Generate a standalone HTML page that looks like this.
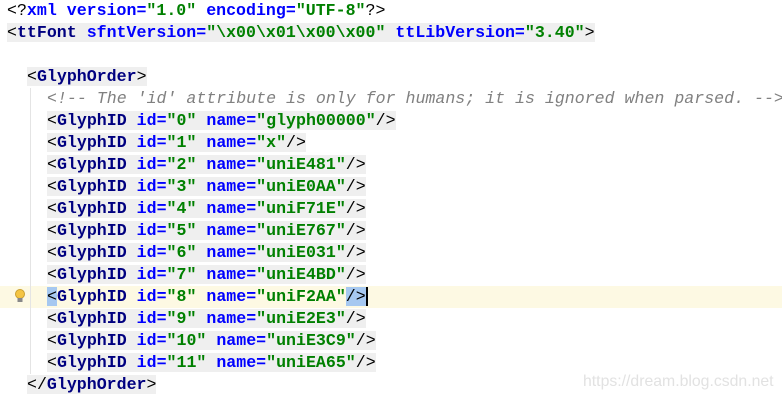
<!DOCTYPE html>
<html><head><meta charset="utf-8"><style>
body{margin:0;width:782px;height:400px;background:#fff;overflow:hidden;position:relative;font-family:"Liberation Mono",monospace;}
.l{position:absolute;left:0;height:22px;line-height:22px;font-size:16.6px;white-space:pre;color:#000;}
.t{background:#efefef;}
.n{color:#000080;font-weight:bold;}
.a{color:#0000ff;font-weight:bold;}
.v{color:#008000;font-weight:bold;}
.c{color:#808080;font-style:italic;}
.hl{position:absolute;left:0;top:286px;width:782px;height:22px;background:#fdf9e3;}
.guide{position:absolute;left:30px;top:88px;width:1px;height:286px;background:#e4e4e4;}
.wm{position:absolute;left:583px;top:373px;font-family:"Liberation Sans",sans-serif;font-size:15.8px;color:#e2e2e2;}
.sel{background:#a6c8f0;}
</style></head><body>
<div class="hl"></div>
<div class="guide"></div>
<div class="l" style="top:0;left:7px">&lt;?<span class="a">xml version=</span><span class="v">"1.0"</span> <span class="a">encoding=</span><span class="v">"UTF-8"</span>?&gt;</div>
<div class="l" style="top:22px;left:7px"><span class="t">&lt;<span class="n">ttFont</span> <span class="a">sfntVersion=</span><span class="v">"\x00\x01\x00\x00"</span> <span class="a">ttLibVersion=</span><span class="v">"3.40"</span>&gt;</span></div>
<div class="l" style="top:66px;left:27px"><span class="t">&lt;<span class="n">GlyphOrder</span>&gt;</span></div>
<div class="l c" style="top:88px;left:47px">&lt;!-- The 'id' attribute is only for humans; it is ignored when parsed. --&gt;</div>
<div class="l" style="top:110px;left:47px"><span class="t">&lt;<span class="n">GlyphID</span> <span class="a">id=</span><span class="v">"0"</span> <span class="a">name=</span><span class="v">"glyph00000"</span>/&gt;</span></div>
<div class="l" style="top:132px;left:47px"><span class="t">&lt;<span class="n">GlyphID</span> <span class="a">id=</span><span class="v">"1"</span> <span class="a">name=</span><span class="v">"x"</span>/&gt;</span></div>
<div class="l" style="top:154px;left:47px"><span class="t">&lt;<span class="n">GlyphID</span> <span class="a">id=</span><span class="v">"2"</span> <span class="a">name=</span><span class="v">"uniE481"</span>/&gt;</span></div>
<div class="l" style="top:176px;left:47px"><span class="t">&lt;<span class="n">GlyphID</span> <span class="a">id=</span><span class="v">"3"</span> <span class="a">name=</span><span class="v">"uniE0AA"</span>/&gt;</span></div>
<div class="l" style="top:198px;left:47px"><span class="t">&lt;<span class="n">GlyphID</span> <span class="a">id=</span><span class="v">"4"</span> <span class="a">name=</span><span class="v">"uniF71E"</span>/&gt;</span></div>
<div class="l" style="top:220px;left:47px"><span class="t">&lt;<span class="n">GlyphID</span> <span class="a">id=</span><span class="v">"5"</span> <span class="a">name=</span><span class="v">"uniE767"</span>/&gt;</span></div>
<div class="l" style="top:242px;left:47px"><span class="t">&lt;<span class="n">GlyphID</span> <span class="a">id=</span><span class="v">"6"</span> <span class="a">name=</span><span class="v">"uniE031"</span>/&gt;</span></div>
<div class="l" style="top:264px;left:47px"><span class="t">&lt;<span class="n">GlyphID</span> <span class="a">id=</span><span class="v">"7"</span> <span class="a">name=</span><span class="v">"uniE4BD"</span>/&gt;</span></div>
<div class="l" style="top:286px;left:47px"><span class="sel">&lt;</span><span class="n">GlyphID</span> <span class="a">id=</span><span class="v">"8"</span> <span class="a">name=</span><span class="v">"uniF2AA"</span><span class="sel">/&gt;</span><span style="border-left:2px solid #000"></span></div>
<div class="l" style="top:308px;left:47px"><span class="t">&lt;<span class="n">GlyphID</span> <span class="a">id=</span><span class="v">"9"</span> <span class="a">name=</span><span class="v">"uniE2E3"</span>/&gt;</span></div>
<div class="l" style="top:330px;left:47px"><span class="t">&lt;<span class="n">GlyphID</span> <span class="a">id=</span><span class="v">"10"</span> <span class="a">name=</span><span class="v">"uniE3C9"</span>/&gt;</span></div>
<div class="l" style="top:352px;left:47px"><span class="t">&lt;<span class="n">GlyphID</span> <span class="a">id=</span><span class="v">"11"</span> <span class="a">name=</span><span class="v">"uniEA65"</span>/&gt;</span></div>
<div class="l" style="top:374px;left:27px"><span class="t">&lt;/<span class="n">GlyphOrder</span>&gt;</span></div>
<svg style="position:absolute;left:14px;top:288px" width="12" height="16" viewBox="0 0 12 16"><circle cx="6" cy="6" r="4.5" fill="#f5c542" stroke="#c9a030"/><rect x="3.5" y="10" width="5" height="4" fill="#888"/></svg>
<div class="wm">https://dream.blog.csdn.net</div>
</body></html>
